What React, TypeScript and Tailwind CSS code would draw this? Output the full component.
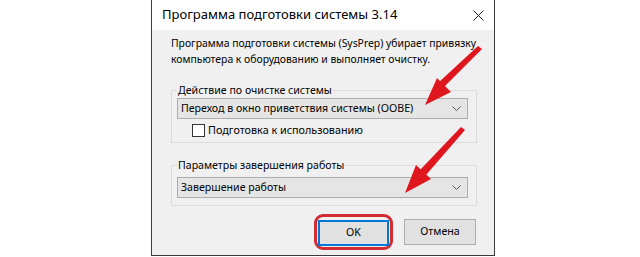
import React from 'react';

const font = { fontFamily: '"Noto Sans", "Liberation Sans", sans-serif' };

const Chevron = () => (
    <svg width="9" height="5" viewBox="0 0 9 5" className="shrink-0">
        <polyline points="0.5,0.5 4.5,4.5 8.5,0.5" fill="none" stroke="#555" strokeWidth="1" />
    </svg>
);

const Select: React.FC<{ value: string }> = ({ value }) => (
    <div className="h-[21px] bg-[#e5e5e5] border border-[#adadad] flex items-center justify-between pl-[3px] pr-[6px] text-[10.6px] text-black">
        <span className="whitespace-nowrap">{value}</span>
        <Chevron />
    </div>
);

const App: React.FC = () => {
    return (
        <div className="relative w-[640px] h-[257px] bg-white overflow-hidden" style={font}>
            <div className="ml-[151px] w-[344px] h-[256px] border-x border-b border-[#3a3a3a] flex flex-col">
                {/* Title bar */}
                <div className="h-[30px] shrink-0 bg-white flex items-center justify-between pl-[10px] pr-[10px]">
                    <span className="text-[13px] text-black whitespace-nowrap">Программа подготовки системы 3.14</span>
                    <svg width="11" height="11" viewBox="0 0 11 11">
                        <path d="M0.5 0.5 L10.5 10.5 M10.5 0.5 L0.5 10.5" stroke="#222" strokeWidth="1" />
                    </svg>
                </div>

                {/* Body */}
                <div className="flex-1 min-h-0 bg-[#f0f0f0] pl-[19px] pr-[17px] pt-[5px] flex flex-col">
                    <p className="text-[10.4px] leading-[16px] text-black whitespace-nowrap">
                        Программа подготовки системы (SysPrep) убирает привязку
                        <br />
                        компьютера к оборудованию и выполняет очистку.
                    </p>

                    <fieldset className="mt-[16px] border border-[#dcdcdc] pl-[5px] pr-[8px] pb-[5px]">
                        <legend className="text-[10.6px] leading-[14px] text-black px-[1px]">Действие по очистке системы</legend>
                        <div className="mt-[1px]">
                            <Select value="Переход в окно приветствия системы (OOBE)" />
                        </div>
                        <label className="flex items-center gap-[3px] mt-[4px] ml-[15px] text-[10.8px] leading-[14px] text-black">
                            <span className="w-[13px] h-[13px] bg-white border border-[#333]" />
                            Подготовка к использованию
                        </label>
                    </fieldset>

                    <fieldset className="mt-[15px] border border-[#dcdcdc] pl-[5px] pr-[8px] pb-[7px]">
                        <legend className="text-[10.6px] leading-[14px] text-black px-[1px]">Параметры завершения работы</legend>
                        <div className="mt-[5px]">
                            <Select value="Завершение работы" />
                        </div>
                    </fieldset>

                    <div className="flex justify-end items-center gap-[11px] mt-[8px] pr-[1px]">
                        <div className="border-[3px] border-[#d42a32] rounded-[9px] p-[1px]">
                            <button className="w-[71px] h-[26px] bg-[#e1e1e1] border-2 border-[#0078d7] text-[10.6px] text-black">
                                OK
                            </button>
                        </div>
                        <button className="w-[72px] h-[26px] bg-[#e1e1e1] border border-[#adadad] text-[10.6px] text-black">
                            Отмена
                        </button>
                    </div>
                </div>
            </div>

            {/* Annotation arrows */}
            <svg className="absolute inset-0 pointer-events-none" width="640" height="257" viewBox="0 0 640 257">
                <g fill="#e0161f">
                    <polygon points="478,46 482,49 444,87 438,83" />
                    <polygon points="425,105 437,78 451,92" />
                    <polygon points="461,127 465,130 426,175 420,170" />
                    <polygon points="405,193 416,165 431,179" />
                </g>
            </svg>
        </div>
    );
};

export default App;
